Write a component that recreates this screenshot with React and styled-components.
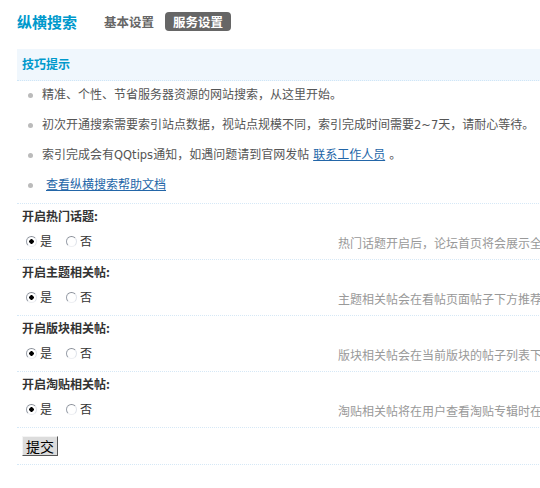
import React from 'react';
import styled, { createGlobalStyle } from 'styled-components';

const GlobalStyle = createGlobalStyle`
  html, body {
    margin: 0;
    padding: 0;
    background: #fff;
    overflow: hidden;
  }
  body {
    font: 12px/1.5 "Noto Sans CJK SC", "Liberation Sans", sans-serif;
    color: #333;
  }
`;

const Page = styled.div`
  width: 720px;
  margin-left: 17px;
`;

const TitleBar = styled.div`
  display: flex;
  align-items: center;
  height: 43px;
`;

const Title = styled.h3`
  margin: 0 27px 0 0;
  font-size: 15px;
  font-weight: 700;
  color: #0099cc;
  line-height: 20px;
`;

const Tab = styled.span`
  display: inline-block;
  margin-right: 11px;
  padding: 0 ${(p) => (p.$active ? '8px' : '0')};
  height: 19px;
  line-height: 19px;
  border-radius: 4px;
  font-size: 12.5px;
  font-weight: 700;
  color: ${(p) => (p.$active ? '#fff' : '#666')};
  background: ${(p) => (p.$active ? '#666' : 'transparent')};
`;

const TipBox = styled.div`
  margin-top: 6px;
`;

const TipHead = styled.div`
  height: 31px;
  line-height: 29px;
  padding-left: 5px;
  background: #f0f7fd;
  border-bottom: 1px dotted #cfe6f7;
  font-weight: 700;
  color: #0099cc;
`;

const TipList = styled.ul`
  list-style: none;
  margin: 0;
  padding: 0 0 6px 0;
`;

const TipItem = styled.li`
  position: relative;
  height: ${(p) => (p.$short ? '26px' : '30px')};
  line-height: 25px;
  padding-left: 25px;
  color: #555;

  &::before {
    content: "";
    position: absolute;
    left: 11px;
    top: 12px;
    width: 5px;
    height: 5px;
    border-radius: 50%;
    background: #bbb;
  }
`;

const Latin = styled.span`
  font-family: "DejaVu Sans", "Liberation Sans", sans-serif;
  font-size: 11.5px;
`;

const Link = styled.a`
  color: #2366a8;
  text-decoration: underline;
  margin: 0 4px;
  cursor: pointer;
`;

const Setting = styled.div`
  border-top: 1px dotted #d6e8f6;
`;

const SettingLabel = styled.div`
  height: 27px;
  line-height: 23px;
  padding-left: 5px;
  font-weight: 700;
  color: #333;
`;

const SettingRow = styled.div`
  display: grid;
  grid-template-columns: 321px 1fr;
  height: 28px;
  align-items: start;
`;

const Radios = styled.div`
  display: flex;
  align-items: center;
  padding: 1px 0 0 9px;
  line-height: 18px;
  color: #333;
`;

const RadioLabel = styled.label`
  display: flex;
  align-items: center;
  margin-right: 14px;
`;

const RadioDot = styled.span`
  display: inline-block;
  box-sizing: border-box;
  width: 11px;
  height: 11px;
  margin-right: 3px;
  border-radius: 50%;
  border: 1px solid;
  border-color: #8a8f99 #dfe3ea #eef0f3 #9aa0aa;
  background: ${(p) =>
    p.$checked
      ? 'radial-gradient(circle, #000 0 2px, #fff 2.5px)'
      : '#fff'};
`;

const Desc = styled.div`
  padding-top: 3px;
  line-height: 18px;
  color: #999;
  white-space: nowrap;
`;

const SubmitRow = styled.div`
  border-top: 1px dotted #d6e8f6;
  border-bottom: 1px dotted #d6e8f6;
  height: 36px;
  padding-left: 5px;
  display: flex;
  align-items: center;
`;

const Button = styled.button`
  height: 20px;
  padding: 0 3px;
  font: 14px/16px "Noto Sans CJK SC", sans-serif;
  color: #000;
  background: #dcdcdc;
  border: 1px solid;
  border-color: #f4f4f4 #555 #555 #f4f4f4;
  border-radius: 0;
  margin-top: -1px;
`;

const settings = [
  { label: '开启热门话题:', desc: '热门话题开启后，论坛首页将会展示全站热门话题' },
  { label: '开启主题相关帖:', desc: '主题相关帖会在看帖页面帖子下方推荐相关内容' },
  { label: '开启版块相关帖:', desc: '版块相关帖会在当前版块的帖子列表下方展示' },
  { label: '开启淘贴相关帖:', desc: '淘贴相关帖将在用户查看淘贴专辑时在下方展示' },
];

const App = () => {
  return (
    <>
      <GlobalStyle />
      <Page>
        <TitleBar>
          <Title>纵横搜索</Title>
          <Tab>基本设置</Tab>
          <Tab $active>服务设置</Tab>
        </TitleBar>

        <TipBox>
          <TipHead>技巧提示</TipHead>
          <TipList>
            <TipItem>精准、个性、节省服务器资源的网站搜索，从这里开始。</TipItem>
            <TipItem>
              初次开通搜索需要索引站点数据，视站点规模不同，索引完成时间需要<Latin>2~7</Latin>天，请耐心等待。
            </TipItem>
            <TipItem>
              索引完成会有<Latin>QQtips</Latin>通知，如遇问题请到官网发帖<Link>联系工作人员</Link>。
            </TipItem>
            <TipItem $short>
              <Link>查看纵横搜索帮助文档</Link>
            </TipItem>
          </TipList>
        </TipBox>

        {settings.map((s) => (
          <Setting key={s.label}>
            <SettingLabel>{s.label}</SettingLabel>
            <SettingRow>
              <Radios>
                <RadioLabel>
                  <RadioDot $checked />是
                </RadioLabel>
                <RadioLabel>
                  <RadioDot />否
                </RadioLabel>
              </Radios>
              <Desc>{s.desc}</Desc>
            </SettingRow>
          </Setting>
        ))}

        <SubmitRow>
          <Button>提交</Button>
        </SubmitRow>
      </Page>
    </>
  );
};

export default App;
